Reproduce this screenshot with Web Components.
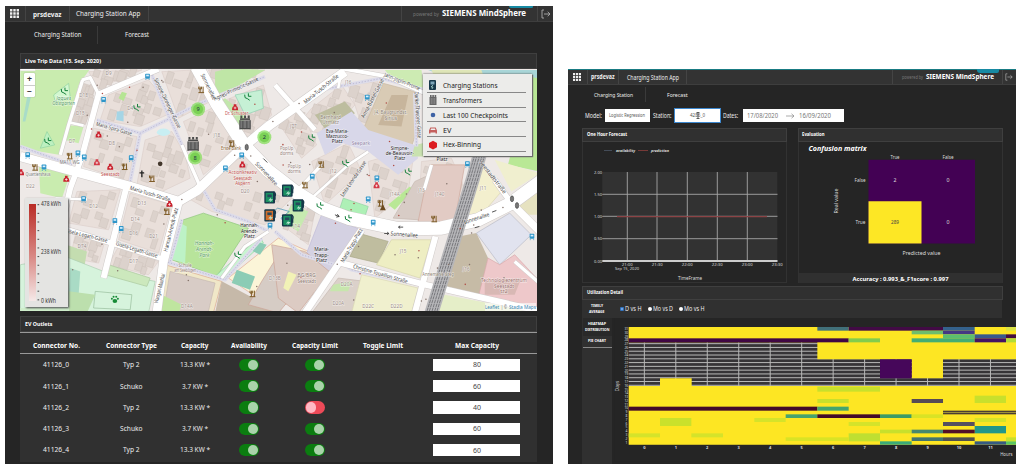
<!DOCTYPE html>
<html lang="en"><head><meta charset="utf-8"><title>Charging Station App</title>
<style>
body{margin:0;background:#fff;width:1024px;height:471px;overflow:hidden;font-family:"Noto Sans","Open Sans",sans-serif}
</style></head><body>
<station-desktop></station-desktop>
<script>
const FONT = '"Noto Sans","Open Sans",sans-serif';
const make = (name, render) => customElements.define(name, class extends HTMLElement {
  connectedCallback(){
    if (this.shadowRoot) return;
    this.attachShadow({mode:'open'}).innerHTML = render(this);
  }
});
/* text in an svg, spread to the width w */
const T = (s,x,y,w,size,o={}) => `<text x="${x}" y="${y}" font-size="${size}" text-anchor="${o.a||'middle'}" fill="${o.c||'#ddd'}" font-weight="${o.b?700:400}" ${o.i?'font-style="italic"':''} ${w?`textLength="${w}" lengthAdjust="spacingAndGlyphs"`:''} ${o.r!==undefined?`transform="rotate(${o.r} ${x} ${y})"`:''} ${o.h?'stroke="#fff" stroke-width="3" stroke-opacity=".6" paint-order="stroke"':''}>${s}</text>`;
const F = (s,w,size,o='') => `<fit-label w="${w}" size="${size}" ${o}>${s}</fit-label>`;

/* one-line label condensed to a set width */
make('fit-label', e => {
  const w=+e.getAttribute('w'), z=+e.getAttribute('size'), h=z*1.3;
  return `<style>:host{display:inline-block;line-height:0;flex:none}svg{display:block;overflow:visible;font-family:${FONT}}</style>
  <svg width="${w}" height="${h}"><text x="0" y="${z*1.0}" font-size="${z}" textLength="${w}" lengthAdjust="spacingAndGlyphs" fill="${e.getAttribute('color')||'#eee'}" font-weight="${e.hasAttribute('bold')?700:400}" ${e.hasAttribute('italic')?'font-style="italic"':''}>${e.textContent}</text></svg>`;
});

make('app-header', e => {
  const s = e.hasAttribute('small');
  const c = s ? [19.5,31.5,68,110,12.5] : [21,44,79,136,15];
  return `<style>
  :host{display:block;box-sizing:border-box;background:#333;${s?'height:15.5px;border-top:1.5px solid #197b83;':'height:16px;'}border-bottom:1px solid #3e3e3e}
  nav{display:grid;height:100%;grid-template-columns:${c[0]}px ${c[1]}px ${c[2]}px 1fr ${c[3]}px ${c[4]}px}
  nav>div{box-sizing:border-box;display:flex;align-items:center;justify-content:center;border-right:1px solid #444;gap:3px}
  nav>div:last-child{border:0}.b{position:relative;border-left:0}
  .b i{position:absolute;right:${s?3:4}px;top:${s?-1:0}px;width:${s?22:24}px;height:${s?4:2}px;background:#178aa3;border-radius:0 0 2px 3px}
  </style><nav><div><svg width="${s?8:9}" height="${s?8:9}" viewBox="0 0 9 9" fill="#eee"><path d="M0 0h2.4v2.4H0zM3.3 0h2.4v2.4H3.3zM6.6 0H9v2.4H6.6zM0 3.3h2.4v2.4H0zM3.3 3.3h2.4v2.4H3.3zM6.6 3.3H9v2.4H6.6zM0 6.6h2.4V9H0zM3.3 6.6h2.4V9H3.3zM6.6 6.6H9V9H6.6z"/></svg></div>
  <div>${F('prsdevaz',s?23.5:28.5,s?6.4:7.6,'bold')}</div><div>${F('Charging Station App',s?52:64.5,s?6.5:7.9)}</div><div></div>
  <div class="b">${F('powered by',s?21:26,s?5:6,'color="#777"')}${F('SIEMENS MindSphere',s?68:84,s?6.6:8,'bold color="#fff"')}<i></i></div>
  <div><svg width="${s?8:10}" height="${s?8:10}" viewBox="0 0 10 10" fill="none" stroke="#aaa" stroke-width=".9"><path d="M3 1H1v8h2M3 5h6M6.7 2.8 9 5 6.7 7.2"/></svg></div></nav>`;
});

make('app-tabs', e => {
  const s=e.hasAttribute('small');
  return `<style>:host{display:grid;grid-template-columns:${s?'63px 63px':'78px 78px'};margin-left:${s?14:14.5}px;height:${s?20:25.5}px;align-items:center}
  div{display:flex;height:${s?15:18}px;align-items:center;justify-content:center}div+div{border-left:1px solid #3a3a3a}</style>
  <div>${F('Charging Station',s?39:47.5,s?6:7.3)}</div><div>${F('Forecast',s?20.5:24,s?6:7.3)}</div>`;
});

/* titled panel with a slot for its content */
make('ui-panel', e => `<style>:host{display:flex;flex-direction:column;box-sizing:border-box}
  header{box-sizing:border-box;height:${e.getAttribute('head')}px;flex:none;display:flex;align-items:center;padding-left:3.5px;background:#303030;border:1px solid #3f3f3f}
  section{flex:1;min-height:0;box-sizing:border-box;${e.hasAttribute('framed')?'border:1px solid #323232;border-top:0':''}}</style>
  <header>${F(e.getAttribute('label'),e.getAttribute('tw'),e.getAttribute('ts'),'bold color="#fff"')}</header><section><slot></slot></section>`);

make('toggle-switch', e => { const on=e.hasAttribute('on'); return `<style>:host{display:flex;width:20.5px;height:12.5px;border-radius:7px;background:${on?'#0b7d10':'#ee4a58'};padding:1px;box-sizing:border-box;justify-content:${on?'flex-end':'flex-start'}}
  i{width:10.5px;height:10.5px;border-radius:50%;background:${on?'#a9d3aa':'#ffb9c4'}}</style><i></i>`; });

make('outlet-table', () => {
  const rows=[['41126_0','Typ 2','13.3 KW *',1,80],['41126_1','Schuko','3.7 KW *',1,60],['41126_2','Typ 2','13.3 KW *',0,40],['41126_3','Schuko','3.7 KW *',1,60],['41126_4','Typ 2','13.3 KW *',1,60]];
  const head=[['Connector No.',47],['Connector Type',51],['Capacity',27.5],['Availability',36],['Capacity Limit',46],['Toggle Limit',40],['Max Capacity',44]];
  return `<style>:host{display:block;background:#303030;height:129.5px}
  .r{display:grid;grid-template-columns:72px 79px 47px 62px 70px 66px 121px;height:21.3px;align-items:center;justify-items:center}
  .h{box-sizing:border-box;height:22px;border-top:1.5px solid #999;border-bottom:1.5px solid #999;margin-bottom:.3px}
  .in{width:87px;height:12.5px;background:#fff;display:flex;align-items:center;justify-content:center}</style>
  <div class="r h">${head.map(h=>'<span>'+F(h[0],h[1],7.2,'bold color="#fff"')+'</span>').join('')}</div>`+
  rows.map(r=>`<div class="r">${F(r[0],26,7.2)}${F(r[1],r[1]=='Typ 2'?16.5:22.5,7.2)}${F(r[2],r[2].length>8?30:26,7.2)}<toggle-switch on></toggle-switch><toggle-switch ${r[3]?'on':''}></toggle-switch><span></span><div class="in">${F(r[4],8,7,'color="#444"')}</div></div>`).join('');
});

/* street map, drawn at three units to the pixel */
make('trip-map', () => {
  const P=(pts,f,s)=>`<polygon points="${pts}" fill="${f}" ${s?`stroke="${s}" stroke-width="2"`:''}/>`;
  const roads=[['15,275 170,318 345,365 490,410 545,378 680,250 765,180 990,20',28],['545,5 605,115 690,245 760,318 840,380 920,430 1000,460 1150,492 1280,490 1390,465 1490,415 1585,345',40],
   ['490,410 445,590 425,745',26],['430,12 250,88 200,275 165,370 135,500',17],['15,14 60,14',6],['200,45 225,38 250,88',10],['202,45 160,180 135,270',10],['160,172 205,182',8],['335,362 265,640',18],['150,492 440,582',15],
   ['500,240 555,365',10],['980,15 970,70',8],['780,60 900,195',14],['890,400 1000,300 1060,260',8],['1040,495 870,745',20],['980,595 1230,660 1580,740',18],['1262,515 1200,745',18],['1490,415 1585,510',22],['1250,300 1228,375',10],['1500,590 1580,660',10],['1440,345 1490,415',16],['840,385 920,300',10],['1480,420 1585,345',30],['980,10 1120,35 1230,85',12],['620,640 690,545 760,500',9],['120,400 215,404',7]];
  const b=[];
  /* residential courtyards and their buildings */
  const blocks=[
   ['220,20 380,15 330,35 250,70',''],['205,60 235,65 225,120 190,125',''],['180,130 225,130 212,172 172,168',''],
   ['280,90 400,45 430,80 455,150 375,185 255,165',''],['235,190 365,215 340,350 205,305',''],['390,225 470,200 510,270 525,340 430,385 365,360',''],
   ['440,20 535,15 585,110 490,160',''],['505,170 590,130 670,240 565,330',''],['580,15 750,15 610,85',''],['620,110 745,60 770,150 700,220',''],
   ['185,380 315,375 280,495 160,475',''],['345,385 470,420 430,565 310,525',''],['180,510 270,525 250,595 165,580',''],['310,545 430,590 400,630 280,600',''],
   ['500,390 690,270 830,400 750,480 590,440',''],['840,190 890,130 980,60 1020,120 940,210',''],['1000,60 1090,50 1080,190 1040,180',''],['785,165 855,130 905,240 860,280',''],
   ['890,290 1000,235 1040,320 930,420',''],['1060,290 1200,250 1180,380 1080,460',''],['1220,290 1310,280 1350,370 1300,450 1210,470',''],['830,420 900,440 880,540 800,480','']];
  blocks.forEach(k=>b.push(P(k[0],'#e9dfda','#dccfca')));
  let n=7; const rnd=()=>(n=(n*16807)%2147483647)/2147483647;
  blocks.forEach(k=>{const p=k[0].split(' ').map(v=>v.split(',').map(Number));const cx=p.reduce((a,v)=>a+v[0],0)/p.length,cy=p.reduce((a,v)=>a+v[1],0)/p.length;
    p.forEach(v=>{[.35,.68].forEach(q=>{const x=cx+(v[0]-cx)*q,y=cy+(v[1]-cy)*q,w=14+rnd()*14,h=18+rnd()*20;b.push(`<rect x="${x-w/2}" y="${y-h/2}" width="${w}" height="${h}" fill="#dcd2cc" stroke="#cbbfb8" stroke-width="1.2" transform="rotate(${18} ${x} ${y})"/>`)});});});
  const green=[
   P('15,15 222,15 190,60 135,270 15,250','#c9ecaf'),P('115,90 160,55 165,100 120,110','#d3f7d0','#8ed2a0'),P('75,250 95,200 118,240','#bdf0c0','#8ed2a0'),P('30,170 50,80 40,70 22,170','#a9dcc8'),
   P('150,180 205,185 190,235 150,225','#c9ecaf'),P('70,290 165,325 140,400 75,385','#c9ecaf'),P('90,520 215,560 205,620 130,600','#c4ddb0'),
   P('150,575 265,620 420,650 400,745 15,745 15,600','#d6f3dc','#aacdb0'),P('165,610 195,620 190,690 160,690','#a9dbc5'),P('280,600 405,640 395,665 270,630','#cce8bd','#a9c79c'),P('240,680 350,690 345,735 235,730','none','#95bb9a'),P('160,680 240,690 215,745 160,745','#bcdfad'),
   P('565,445 700,490 680,520 605,635 470,585 505,465','#b8e49b','#8cc57a'),P('495,475 515,485 510,595 472,585','#bdf2c6'),P('600,635 735,515 745,535 630,640','#c8f5d0','#8ed2a0'),
   P('450,600 620,650 595,745 430,745','#f0e7c8','#d9a78d'),P('465,620 600,655 580,740 445,740','#d8ccc6','#c5b8b1'),P('620,650 780,735 778,745 600,745','#c6b9a9'),P('640,640 790,520 880,560 850,700 780,735','#fbf5d8','#dfa892'),
   P('725,530 755,540 735,570 705,555','#8cccb5'),P('665,615 720,635 705,675 650,655','#8cccb5'),P('740,650 790,570 850,560 860,660 790,745 700,720','#d6ccc5','#cba395'),
   P('440,690 500,720 490,745 435,745','#bfe59f'),P('320,80 335,85 325,108 310,100','#b6e594'),P('305,140 325,138 325,170 303,165','#a5d5e5'),
   P('600,20 640,10 750,15 640,80 600,90','#bfe6a6'),P('630,100 690,150 680,215 610,110','#c2e7ac'),P('660,90 740,75 745,130 690,150','#c6f0d5','#8fceb0'),
   P('1110,15 1220,15 1230,90 1130,40','#cdebb3'),P('1240,15 1575,15 1575,50 1280,30','#a9d6d8'),P('1250,15 1400,15 1410,45 1260,40','#dfe6b8'),P('1545,35 1575,40 1575,320 1480,300','#b9e896'),
   P('1105,55 1200,80 1205,200 1190,245 1040,205','#d9cbb5','#c9b9a3'),P('1130,90 1180,90 1160,185 1090,180','#c7b59c'),P('900,150 990,110 1020,145 940,205','#bdbd9f'),
   P('905,205 1010,140 1060,195 1200,240 1210,280 1150,330 1060,260 985,235 930,270','#d8d7e9'),P('1200,240 1290,220 1290,275 1190,275','#c9e2b0'),
   P('985,400 1060,425 1050,455 975,430','#aef0b6','#8ed2a0'),P('1120,420 1185,365 1195,375 1140,435','#b9e896'),P('920,450 1040,495 940,630 875,565','#d4d1e2','#beb9d8'),P('1040,508 1120,530 1090,595 1005,575','#bfbd9f','#a9a888'),P('1130,525 1250,525 1215,640 1085,600','#eeeec3','#d6d5ab'),
   P('1200,350 1310,300 1290,470 1135,460','#d8ccc6','#c5b8b1'),P('1245,300 1350,300 1320,470 1210,470','#e2cbc4','#cea89b'),
   P('1310,520 1385,505 1420,580 1395,695 1280,660','#c6bba6'),P('1385,505 1485,445 1550,510 1455,600','#e1e3ef','#b8b9c5'),P('1420,580 1455,600 1500,570 1575,650 1575,735 1390,700','#eec8ca','#d8a8aa'),P('1410,650 1520,640 1500,690 1410,690','#d8b8b4'),
   P('1400,300 1460,380 1400,450 1330,460','#f3efce','#dbd6af'),P('1440,285 1575,325 1490,380','#f0efcf'),P('1500,430 1575,380 1575,450 1530,450','#e6e2c0'),
   P('830,420 880,440 850,500 800,470','#c6eab0'),P('970,640 1050,650 1010,745 890,745','#dbd1ca','#c5b8b1'),P('955,660 1010,650 1000,680 945,680','#c7e6ad'),
   P('1040,630 1210,670 1190,745 1010,745','#f0f0ce','#d9d8b4'),P('1290,690 1575,745 1260,745','#e5eec8'),P('15,745 160,745 160,730 15,730','#cfeecb'),
   P('770,540 870,560 955,630 900,680 850,745 790,700','#dccbc3','#cba395'),P('820,620 845,630 820,680 805,670','#f2f2b6')].join('');
  const line=(p,w,c,d)=>`<polyline points="${p}" fill="none" stroke="${c}" stroke-width="${w}" stroke-linejoin="round" ${d?`stroke-dasharray="${d}"`:''}/>`;
  const peds=['245,165 375,205 555,115 750,35','410,30 450,130 505,250','375,205 345,350','565,375 600,435 700,470 760,500','450,590 630,645 740,520','980,595 1010,615 1400,700','15,245 170,300','780,500 860,570 960,600','500,465 465,590','1200,85 1205,245','890,80 1100,40 1230,75'];
  const L=(s,x,y,w,r=0,o={})=>T(s,x,y,w,o.z||17,{c:o.c||'#444',h:1,r,i:o.i});
  const green2='#5c9c68', rail='1395,270 1375,340 1250,745';
  const tree=(x,y,c)=>`<g transform="translate(${x} ${y})" stroke="${c}" fill="none" stroke-width="3"><path d="M-9-6q-2 12 8 12l7 5M2-10v9h9"/></g>`;
  const poi=(x,y,c)=>`<g transform="translate(${x} ${y})"><path d="M-9 8q0-12 5-12v-6h8v6q5 0 5 12z" fill="${c}"/><path d="M-4 1h8M0-3v8" stroke="#fff" stroke-width="2"/></g>`;
  const blue=(x,y)=>`<g transform="translate(${x} ${y})"><rect x="-7" y="-8" width="14" height="15" rx="2" fill="#2f96c9"/><rect x="-4" y="-5" width="8" height="5" fill="#d8f0ff"/><path d="M-5 9v2M5 9v2" stroke="#2f96c9" stroke-width="3"/></g>`;
  const food=(x,y)=>`<g transform="translate(${x} ${y})" stroke="#7d5a25" stroke-width="3" fill="none"><path d="M-7-9v7h8v-7M-3-9V9M6-9V9M-8 9H9"/></g>`;
  const tr=(x,y)=>`<g transform="translate(${x} ${y})" fill="#4b4b4b"><path d="M-15-14h30v5h-30z"/><path d="M-16-8H16V18H-16z" fill="#777"/><path d="M-14-22h6v8h-6zM-3-22h6v8h-6zM8-22h6v8H8zM-17-8h3v28h-3zM14-8h3v28h-3zM-8-6h3v24h-3zM4-6h3v24H4zM-17 15h34v4h-34z"/></g>`;
  const cl=(x,y,s)=>`<circle cx="${x}" cy="${y}" r="21" fill="#7fdd52" fill-opacity=".7"/><circle cx="${x}" cy="${y}" r="15" fill="#6dcb46" fill-opacity=".75"/>${T(s,x,y+6,0,17,{c:'#234'})}`;
  const st=(x,y,c='#1b9162')=>`<g transform="translate(${x} ${y})"><rect x="-16" y="-17" width="32" height="37" rx="3" fill="#17384a"/><rect x="-12" y="-12" width="22" height="28" fill="${c}"/><path d="M-7-7H6v8H-7z" fill="#27485c"/><path d="m4 2-8 9h7l-4 7 11-11H3z" fill="#b7e7cf"/><path d="M12-14q8 2 4 13v10" stroke="#17384a" stroke-width="4" fill="none"/></g>`;
  let dots='';for(let i=0;i<90;i++){const x=170+rnd()*1380,y=30+rnd()*700;dots+=`<circle cx="${x}" cy="${y}" r="2.3" fill="${i%3?'#85736b':'#af4b43'}"/>`}
  let nums='';[['D18',205,95],['D15',195,150],['D4',345,135],['D7',170,235],['D8',290,240],['D9',280,30],['J18',605,215],['D12',235,430],['D13',380,420],['D14',360,470],['D16',355,510],['D21',415,520],['D74',200,550],['D17',355,595],['D20',690,385],['J77',835,190],['J12',955,325],['J14A',1140,395],['J14C',1275,395],['J13',1220,382],['D13B',780,645],['D20A',970,720],['D20A',995,665],['J15',1165,565],['J16',1355,618],['J11',1405,375],['D22C',1060,730],['D22D',1145,730],['J14',845,490],['J16',1000,58],['D14A',515,730],['D22',45,370]].forEach(a=>nums+=L(a[0],a[1],a[2],0,0,{z:14,c:'#9a8a86'}));
  const leg=['Charging Stations','Transformers','Last 100 Checkpoints','EV','Hex-Binning'];
  const lw=[54.5,39,65,8.5,38];
  const ic=['<rect x="1" y="0" width="7" height="10" rx="1" fill="#17384a"/><path d="M2.5 1.5h4v3h-4z" fill="#7da5b8"/><path d="m5 5-2 2h2L4 9" stroke="#a7d7cf" stroke-width=".8" fill="none"/>','<path d="M1.5 2h7v8h-7zM2 0h1.6v2H2zM4.3 0h1.6v2H4.3zM6.6 0h1.6v2H6.6z" fill="#666"/><path d="M3.3 3v6M5 3v6M6.7 3v6" stroke="#aaa" stroke-width=".5"/>','<circle cx="5" cy="5" r="2.3" fill="#3e63a5"/>','<path d="M1 5.5 2.3 2.5h5.4L9 5.5v3H7.5v-1h-5v1H1z" fill="#c4605d"/><path d="m2.5 5 .6-1.6h3.8L7.5 5z" fill="#eee"/>','<path d="m5 .8 4 2.2v4.2L5 9.5 1 7.2V3z" fill="#dc1d20"/>'];
  return `<style>:host{display:block;position:relative;width:517px;height:242px;overflow:hidden}
  .m{display:block;font-family:${FONT}}
  .zoom{position:absolute;left:4px;top:4px;width:11px;background:#fff;border-radius:1px;box-shadow:0 0 1px #666}
  .zoom div{height:11.5px;display:flex;align-items:center;justify-content:center}.zoom div+div{border-top:1px solid #ccc}
  .scale{position:absolute;left:5px;top:129px;width:43px;height:109px;box-sizing:border-box;background:#e4e4e2;box-shadow:1px 1px 2px #444;padding:6px 3px 6px 4px;display:flex;gap:1px}
  .bar{width:6.5px;background:linear-gradient(#b92c26,#d98a86 55%,#f5e9e8)}
  .tx{display:flex;flex-direction:column;justify-content:space-between;margin:-4px 0}
  .legend{position:absolute;left:403px;top:5px;width:109px;height:82px;box-sizing:border-box;background:#ececea;box-shadow:0 0 2px #555,1px 1px 1px #777;padding:4px 6px 0 4px}
  .legend div{height:14.8px;box-sizing:border-box;border-bottom:1px solid #888;display:flex;align-items:center;gap:5px;padding-left:1px}
  .legend svg{margin-top:1px}.legend fit-label{margin-top:2px}
  .at{position:absolute;right:1px;bottom:0;display:flex;gap:2px;background:#ffffff99;height:8px}</style>
  <svg class="m" width="517" height="242" viewBox="15 12 1551 727"><rect x="0" y="0" width="1600" height="760" fill="#eee9e7"/>
  ${b.join('')}${green}${peds.map(p=>line(p,11,'#dddcea')+line(p,2,'#aaa7c9','4 5')).join('')}
  ${roads.map(r=>line(r[0],r[1]+3,'#cfcac8')).join('')}${roads.map(r=>line(r[0],r[1],'#fff')).join('')}
  ${line(rail,42,'#b6b6b9')}${[-15,-8,0,8,15].map(d=>`<g transform="translate(${d} 0)">${line(rail,3,'#77777b','10 2')}</g>`).join('')}
  ${dots}${nums}
  ${L('Maria-Tusch-Straße',922,76,130,-39)}${L('Jahn-Joplin-Prome',1160,55,115,22)}${L('Sonnenallee',575,68,85,64)}${L('Agnes-Primocic-Gasse',665,77,145,-25)}${L('Simone-Dinninger-Gasse',452,117,165,64)}${L('Maria-Spira-Gasse',295,197,112,16)}${L('Anna-Bastel-Gasse',1078,103,130,-63)}${L('Danke-Thavoner-Gasse',1204,150,140,86)}
  ${L('Maria-Tusch-Straße',403,392,125,17)}${L('Gisela-Legath-Gasse',363,560,130,17)}${L('Gisela-Legath-Gasse',212,518,130,14)}${L('Hannah-Arendt-Platz',473,496,135,-76)}${L('Sonnenallee',1168,515,82,4)}${L('Sonnenallee',1387,466,80,-18)}${L('Sonnenallee',750,330,90,47)}${L('Christine-Touaillon-Straße',1095,633,170,16)}${L('Maria-Trapp-Platz',1015,545,115,-60)}${L('Seestadtstraße',1430,340,120,52)}${L('Leita-Leonda-Gasse',1020,345,125,-56)}
  ${['Eva-Maria-','Mazzucco-','Platz'].map((s,i)=>L(s,967,203+i*16,i<2?68:33,0,{c:'#222'})).join('')}${['Simone-','de-Beauvoir-','Platz'].map((s,i)=>L(s,1155,254+i*16,[55,85,33][i],0,{c:'#222'})).join('')}${['Maria-','Trapp-','Platz'].map((s,i)=>L(s,920,560+i*16,[44,44,33][i],0,{c:'#222'})).join('')}${['Hannah-','Arendt-','Platz'].map((s,i)=>L(s,703,487+i*17,[55,50,33][i],0,{c:'#222'})).join('')}${L('Platz',1282,289,33,0,{c:'#222'})}
  ${['Hannah-','Arendt-','Park'].map((s,i)=>L(s,568,542+i*18,[58,50,30][i],0,{c:green2,i:1})).join('')}${['Jaques','Obstgarten'].map((s,i)=>L(s,145,104+i*15,[45,68][i],0,{z:15,c:green2,i:1})).join('')}
  ${['Actionkreativ','Seestadt','Aspern'].map((s,i)=>L(s,683,328+i*16,[85,55,45][i],0,{z:15,c:'#c35150'})).join('')}${L('Dr. Schuster',665,150,70,0,{z:15,c:'#c35150'})}${L('Seestadt',285,332,55,0,{z:15,c:'#c35150'})}${L('Erste Bank',648,255,60,0,{z:14,c:'#876335'})}${L('Quartiershaus',68,333,75,0,{z:14,c:'#777'})}${L('MA11 WG',163,298,60,0,{z:14,c:'#777'})}${L('Seepark',1038,240,55,0,{z:16,c:'#9084a6'})}
  ${['J4, Baugrundst.','Sirius'].map((s,i)=>L(s,1128,147+i*17,[100,38][i],0,{z:15,c:'#8c8172'})).join('')}${['Bernhard','Urmatz'].map((s,i)=>L(s,947,163+i*14,[62,50][i],0,{z:14,c:'#8c8172'})).join('')}${['PopUp','dorms'].map((s,i)=>L(s,815,255+i*15,40,0,{z:14,c:'#96827b'})+L(s,838,308+i*15,40,0,{z:14,c:'#96827b'})).join('')}${['BG/BRG','Seestadt'].map((s,i)=>L(s,875,638+i*16,55,0,{z:15,c:'#8c7770'})).join('')}${['Technologiezentrum','Seestadt','tz2'].map((s,i)=>L(s,1468,652+i*17,[138,60,22][i],0,{z:15,c:'#9a6f6c'})).join('')}${['Schule','am Seebogen'].map((s,i)=>L(s,510,606+i*16,[40,66][i],0,{z:14,c:'#96827b'})).join('')}${L('Annemarie-Steg',1270,633,95,0,{z:14,c:'#8c8172'})}${L('Wangari-Maathai',439,672,90,-76)}
  ${[[147,78],[365,127],[698,95],[890,218],[992,294],[1180,320],[668,570],[915,422],[1000,460]].map(p=>tree(...p,'#14803b')).join('')}${tree(97,228,'#14803b')}
  ${[[250,210],[285,307],[660,128],[682,300],[153,343],[463,418],[17,323]].map(p=>poi(...p,'#c9202c')).join('')}${[[245,293],[1085,362]].map(p=>poi(...p,'#d23744')).join('')}
  ${[[397,34],[265,104],[348,279],[188,265],[207,277],[86,307],[37,270],[205,402],[299,468],[680,271],[631,310],[1358,297],[892,335],[765,482],[1552,515],[318,492],[1060,403],[1086,340],[1075,473],[1057,97]].map(p=>blue(...p)).join('')}
  ${[[558,74],[163,273],[328,305],[410,341],[650,235],[59,307],[455,440],[870,360],[1097,415],[919,298],[712,687],[1258,462]].map(p=>food(...p)).join('')}
  <path d="M380 317v20M373 324h14" stroke="#222" stroke-width="4"/><g fill="#168a35"><ellipse cx="299" cy="709" rx="7" ry="6"/><circle cx="290" cy="702" r="3"/><circle cx="295" cy="696" r="3"/><circle cx="303" cy="696" r="3"/><circle cx="308" cy="702" r="3"/></g><circle cx="435" cy="297" r="7" fill="#43372c"/><path d="m1095 436 9-18 9 18z" fill="#6c4a20"/><ellipse cx="445" cy="202" rx="20" ry="11" fill="#c8eef2"/>
  <g fill="none" stroke="#333" stroke-width="2.5"><path d="m960 450 12 5m-5-7 6 7-9 2M1165 487h-14l5-4m-5 4 5 4M1108 506h14l-5-4m5 4-5 4M1445 437l-13 5M1380 489l14-4M745 281l12 12"/></g><g fill="#777" stroke="#333" stroke-width="1.5"><ellipse cx="695" cy="247" rx="5" ry="9"/><ellipse cx="1492" cy="402" rx="5" ry="9"/><ellipse cx="1507" cy="422" rx="5" ry="9"/></g>
  ${tr(534,238)}${tr(690,174)}${cl(549,133,'9')}${cl(540,278,'8')}${cl(748,217,'2')}
  <path d="m768 445 20-15 35 10-25 20 15 20" stroke="#368cb0" stroke-width="2" fill="none"/>${st(764,396)}${st(817,376)}${st(849,420)}${st(764,450,'#d06f2d')}${st(817,465)}
  </svg>
  <div class="zoom"><div>${F('+',5,8,'bold color="#333"')}</div><div>${F('−',5,8,'bold color="#333"')}</div></div>
  <div class="scale"><div class="bar"></div><svg width="3" height="97" viewBox="0 0 3 97" stroke="#444">${[...Array(12)].map((_,i)=>`<path d="M.5 ${.7+i*8.65}h1.7"/>`).join('')}</svg><div class="tx">${F('478 kWh',20,6.3,'color="#333"')}${F('238 kWh',20,6.3,'color="#333"')}${F('0 kWh',15,6.3,'color="#333"')}</div></div>
  <div class="legend">${leg.map((s,i)=>`<div><svg width="10" height="10">${ic[i]}</svg>${F(s,lw[i],7.3,'color="#222"')}</div>`).join('')}</div>
  <div class="at">${F('Leaflet',14,5.8,'color="#3485b3"')}${F('| ©',6,5.8,'color="#555"')}${F('Stadia Maps',27,5.8,'color="#3485b3"')}</div>`;
});

make('forecast-form', () => `<style>:host{display:flex;align-items:center;height:14px;margin-left:16.5px}
  .f{background:#fff;height:13px;box-sizing:border-box;display:flex;align-items:center;justify-content:center;width:45.5px;margin:0 3px;position:relative}.on{box-shadow:0 0 0 1px #3d88cf}
  .d{width:101px;margin:0 0 0 4.5px;gap:8px;justify-content:flex-start;padding-left:4.5px;box-sizing:border-box}.cur{position:absolute;left:21px;top:3px}
  .d fit-label:last-child{margin-left:-4px}</style>
  ${F('Model:',17,6.6)}<div class="f">${F('Logistic Regression',36,5.1,'color="#555"')}</div>${F('Station:',18.5,6.6)}<div class="f on">${F('4286_0',15,5.4,'color="#555"')}<svg class="cur" width="4" height="7" stroke="#222" fill="none" stroke-width=".7"><path d="M.5.5h3M2 .5v6M.5 6.5h3"/></svg></div>${F('Dates:',15,6.6)}
  <div class="f d">${F('17/08/2020',31,6.7,'color="#777"')}<svg width="9" height="6" fill="none" stroke="#888" stroke-width=".7"><path d="M0 3h8M5.5.8 8 3 5.5 5.2"/></svg>${F('16/09/2020',32,6.7,'color="#777"')}</div>`);

make('hour-chart', () => {
  const xs=[627.3,657,687.3,717.3,747.3], ys=[194.3,216.3,238.7,261];
  return `<style>:host{display:block}svg{display:block;font-family:${FONT}}</style><svg width="203" height="140" viewBox="583 142 203 140">
  <rect x="602.3" y="172" width="175" height="89" fill="#323232"/><g stroke="#a6a6a6" stroke-width=".9">${xs.map(x=>`<path d="M${x} 172V261"/>`).join('')}${ys.map((y,i)=>`<path d="M602.3 ${y}H777.5" ${i==3?'stroke-width="1.8" stroke="#ccc"':''}/>`).join('')}</g>
  <path d="M617 216.6H767" stroke="#8c4446" stroke-width="1.1"/><path d="M604 150.5h8" stroke="#444c58"/><path d="M638 150.5h10" stroke="#8c3f3c" stroke-width=".8"/>
  ${T('availability',625.5,152,19,4.2,{i:1,b:1})}${T('prediction',660,152,18,4.2,{i:1,b:1})}
  ${['2.00','1.50','1.00','0.50','0.00'].map((s,i)=>T(s,598,173.5+i*22.25,8,4.1)).join('')}
  ${['21:00','21:30','22:00','22:30','23:00','23:30'].map((s,i)=>T(s,627.3+i*30,265.5,11,4.1)).join('')}${T('Sep 15, 2020',627,270,24,4.1)}${T('TimeFrame',690,279.5,24,5)}</svg>`;
});

make('confusion-matrix', () => `<style>:host{display:block}svg{display:block;font-family:${FONT}}</style><svg width="203" height="141" viewBox="798.5 142 203 141">
  ${T('Confusion matrix',837,151,58,6.5,{i:1,b:1,c:'#fff'})}
  <path fill="#430154" d="M868 159.7h106.5v83.8H868z"/><path fill="#fde725" d="M868 201.3h53v42.2h-53z"/>
  ${T('True',894.5,158.5,9,4.6)}${T('False',947.5,158.5,11,4.6)}${T('False',859.5,182,11,4.6)}${T('True',860,224,10,4.6)}
  ${T('2',894.5,182,3,4.8)}${T('0',947.5,182,3,4.8)}${T('0',947.5,224,3,4.8)}${T('289',894.5,224,8,4.8,{c:'#444'})}
  ${T('Real value',837,201,25,5,{r:-90})}${T('Predicted value',921,254.5,38,5)}
  <path fill="#303030" d="M798.5 273h203v10h-203z"/>${T('Accuracy : 0.993_&amp;_F1score : 0.997',900,280.5,96,6,{b:1,c:'#fff'})}</svg>`);

/* day by hour heat map; cells are x1, x2, y1, y2, fill */
make('utilization-map', () => {
  const c=[[760,854,141,152,'#41707a'],[854,1137,141,152,'#420a45'],[1137,1232,141,152,'#34618c'],[1326,1356,141,152,'#dbe345'],[1043,1137,152,163,'#6ebd6c'],[1137,1232,152,163,'#453783'],
  [1137,1232,163,175,'#5bbd6f'],[1232,1326,163,175,'#38598c'],[1326,1356,163,175,'#440b3e'],[194,854,175,187,'#400744'],[854,948,175,187,'#83cc4d'],[1043,1232,175,187,'#44ad73'],[1232,1326,175,187,'#441263'],[1326,1356,175,187,'#b2dc38'],
  [948,1043,238,295,'#46075a'],[760,948,320,335,'#c8e02c'],[760,854,357,369,'#c8e02c'],[1043,1137,357,369,'#564b55'],[1232,1326,347,369,'#c8e02c'],[194,760,380,392,'#430a29'],[760,854,380,392,'#44a56e'],
  [665,760,403,414,'#47a36e'],[760,948,403,414,'#430a29'],[948,1043,403,414,'#3d9b65'],[1043,1137,403,414,'#d9e325'],[288,382,414,438,'#cae12b'],[571,665,414,426,'#d5e32a'],[854,948,426,438,'#d5e32a'],[1137,1356,392,403,'#4a3e34'],
  [1137,1232,426,438,'#55505f'],[1232,1326,414,426,'#d5e32a'],[1232,1326,438,460,'#219789'],[948,1043,449,460,'#c8e02c'],[1043,1137,449,460,'#47886e'],[1137,1232,449,460,'#530f28'],[194,288,460,472,'#d5e32a'],[382,477,460,472,'#d5e32a'],
  [854,948,460,484,'#bfdf31'],[665,854,472,483,'#d9e325'],[1043,1137,472,483,'#44756f'],[1137,1232,472,483,'#51514d'],[948,1043,484,494,'#3bab78'],[1232,1326,484,494,'#365b82'],[1326,1356,472,483,'#c8e02c'],[1326,1356,484,494,'#5ac763']];
  const y='#fde623';
  return `<style>:host{display:block;flex:none}svg{display:block;font-family:${FONT}}</style><svg width="401.7" height="145.5" viewBox="150 114 1205 436.5"><rect x="150" y="114" width="1205" height="430" fill="#252525"/>
  <rect x="194" y="141" width="1162" height="353" fill="#363437"/><g stroke="#b8b8b8" stroke-width="3">${[...Array(12)].map((_,i)=>`<path d="M194 ${191+i*11.35}H1356"/>`).join('')}${[...Array(12)].map((_,i)=>`<path d="M${241+i*94.4} 187V318"/>`).join('')}</g>
  <path fill="${y}" d="M194 141h1162v46H194zM760 186h596v52H760zM1043 238h94v57h-94zM288 295h95v24h-95zM194 318h1162v176H194z"/>
  ${c.map(k=>`<rect x="${k[0]}" y="${k[2]}" width="${k[1]-k[0]}" height="${k[3]-k[2]}" fill="${k[4]}"/>`).join('')}
  <path d="M1137 397.5h219" stroke="#c9b93c" stroke-width="2"/>
  ${[...Array(31)].map((_,i)=>T(31-i,187,150+i*11.35,0,10)).join('')}${[...Array(12)].map((_,i)=>T(i,241+i*94.4,506,0,12,{b:1})).join('')}${T('Days',165,318,31,14,{r:-90})}${T('Hours',1327,529,37,14.5)}</svg>`;
});

make('utilization-detail', () => `<style>:host{display:flex;height:100%;background:#252525}
  aside{width:30px;background:#303030;flex:none;display:flex;flex-direction:column;align-items:center}
  aside div{display:flex;flex-direction:column;align-items:center;justify-content:center;height:18px;width:29px;line-height:0}
  .two{background:#292929}.last{height:11px;border-bottom:1px solid #888;padding:0}
  .r{display:flex;flex:none;flex-direction:column;width:403.5px;align-items:flex-end}.o{height:18.5px;width:390px;background:#303030;align-self:flex-start;display:flex;align-items:center;gap:6px;padding-left:8px;box-sizing:border-box}
  .o span{display:flex;align-items:center;gap:1px}.o i{width:4px;height:4px;border-radius:50%;background:#fff}.o .on{background:#8cbaf4;box-shadow:inset 0 0 0 1px #1f68bd}</style>
  <aside><div class="one">${F('TIMELY',12,4.1,'bold color="#fff"')}${F('AVERAGE',15.5,4.1,'bold color="#fff"')}</div><div class="two">${F('HEATMAP',18,4.1,'bold color="#fff"')}${F('DISTRIBUTION',24.5,4.1,'bold color="#fff"')}</div><div class="last">${F('PIE CHART',18,4.1,'bold color="#fff"')}</div></aside>
  <div class="r"><div class="o"><span><i class="on"></i>${F('D vs H',16.5,6.4)}</span><span><i></i>${F('Mo vs D',20,6.4)}</span><span><i></i>${F('Mo vs H',20.5,6.4)}</span></div><utilization-map></utilization-map></div>`);

make('station-desktop', () => `<style>:host{display:flex;align-items:flex-start;gap:15px;padding:6px 0 0 4.5px;width:1024px;height:471px;box-sizing:border-box}
  .win{background:#252525;overflow:hidden;flex:none;box-sizing:border-box}.a{width:548.5px;height:457.5px}.b{width:447.5px;height:394.5px;margin-top:63px}
  .a ui-panel{margin:5px 0 0 15.5px;width:517px}.fc{display:flex;gap:10.5px;margin:5px 0 0 14px}.fc ui-panel{width:205px;height:155px}
  .u{margin:3px 0 0 14px;height:178px;width:420.5px}.sp{height:4px}</style>
  <div class="win a"><app-header></app-header><app-tabs></app-tabs>
  <ui-panel head="16.5" label="Live Trip Data (15. Sep. 2020)" tw="76" ts="6"><trip-map></trip-map></ui-panel>
  <ui-panel head="16" label="EV Outlets" tw="27.5" ts="5.8"><outlet-table></outlet-table></ui-panel></div>
  <div class="win b"><app-header small></app-header><app-tabs small></app-tabs><div class="sp"></div><forecast-form></forecast-form>
  <div class="fc"><ui-panel framed head="14.5" label="One Hour Forecast" tw="40" ts="5.2"><hour-chart></hour-chart></ui-panel><ui-panel framed head="14.5" label="Evaluation" tw="22.5" ts="5.2"><confusion-matrix></confusion-matrix></ui-panel></div>
  <ui-panel class="u" head="14" label="Utilization Detail" tw="36" ts="5.4"><utilization-detail></utilization-detail></ui-panel></div>`);
</script></body></html>
